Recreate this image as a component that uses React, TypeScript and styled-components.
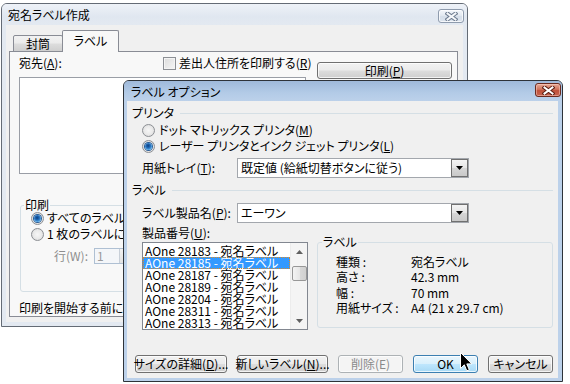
import React from "react";
import styled, { createGlobalStyle } from "styled-components";

const Global = createGlobalStyle`
  html, body { margin: 0; padding: 0; background: #ffffff; }
  body {
    font-family: "Noto Sans CJK JP", "Noto Sans", sans-serif;
    font-size: 12px;
    line-height: 14px;
    color: #000;
    font-feature-settings: "palt";
  }
  #root { width: 570px; height: 384px; }
`;

const Desktop = styled.div`
  position: relative;
  width: 570px;
  height: 384px;
  overflow: hidden;
  background: #ffffff;
`;

/* ---------- window chrome ---------- */
const Win = styled.div<{ $x: number; $y: number; $w: number; $h: number; $active?: boolean }>`
  position: absolute;
  left: ${(p) => p.$x}px;
  top: ${(p) => p.$y}px;
  width: ${(p) => p.$w}px;
  height: ${(p) => p.$h}px;
  box-sizing: border-box;
  display: flex;
  flex-direction: column;
  border: 1px solid ${(p) => (p.$active ? "#2e3339" : "#646b75")};
  border-radius: 6px 6px 0 0;
  background: ${(p) => (p.$active ? "#bcd1ea" : "#e3e9f1")};
  overflow: hidden;
`;

const TitleBar = styled.div<{ $h: number; $active?: boolean; $pad: number }>`
  height: ${(p) => p.$h}px;
  flex: none;
  display: flex;
  align-items: flex-start;
  justify-content: space-between;
  padding-left: ${(p) => p.$pad}px;
  background: ${(p) =>
    p.$active
      ? "linear-gradient(#9fb9da, #b3cbe7 60%, #bcd1ea)"
      : "linear-gradient(#eef2f8, #e0e7f0 60%, #e3e9f1)"};
`;

const TitleText = styled.span<{ $top: number }>`
  margin-top: ${(p) => p.$top}px;
  white-space: nowrap;
  color: #000;
`;

const CloseBtn = styled.div<{ $active?: boolean; $top: number; $right: number }>`
  box-sizing: border-box;
  width: 26px;
  height: 14px;
  margin-top: ${(p) => p.$top}px;
  margin-right: ${(p) => p.$right}px;
  border-radius: 3px;
  border: 1px solid ${(p) => (p.$active ? "#6b2a1f" : "#8e9bad")};
  background: ${(p) =>
    p.$active
      ? "linear-gradient(#e6a996, #d0735c 45%, #c0513a 55%, #c76450)"
      : "linear-gradient(#f4f7fb, #e3e9f1 45%, #d5dee9 55%, #dde4ee)"};
  box-shadow: inset 0 0 0 1px ${(p) => (p.$active ? "rgba(255,220,210,0.45)" : "rgba(255,255,255,0.7)")};
  display: flex;
  align-items: center;
  justify-content: center;
`;

const Frame = styled.div<{ $pad: string }>`
  flex: 1;
  display: flex;
  padding: ${(p) => p.$pad};
  min-height: 0;
`;

/* ---------- common controls ---------- */
const Key = styled.span`
  text-decoration: underline;
  text-underline-offset: 1px;
`;

const RadioDot = styled.span<{ $on?: boolean }>`
  box-sizing: border-box;
  width: 13px;
  height: 13px;
  flex: none;
  border-radius: 50%;
  border: 1px solid #8c8f94;
  background: radial-gradient(circle at 50% 50%, #f6f6f6 0, #eaeaea 50%, #d3d3d3 100%);
  display: inline-flex;
  align-items: center;
  justify-content: center;
  &::after {
    content: "";
    display: ${(p) => (p.$on ? "block" : "none")};
    width: 7px;
    height: 7px;
    border-radius: 50%;
    background: radial-gradient(circle at 45% 40%, #0d3f7d 0, #1f67b5 35%, #5db1ec 75%, #9ad3f7 100%);
    box-shadow: 0 0 0 1px #2a5d96;
  }
`;

const CheckBox = styled.span`
  box-sizing: border-box;
  width: 13px;
  height: 13px;
  flex: none;
  border: 1px solid #8c8f94;
  background: linear-gradient(135deg, #dcdcdc, #f6f6f6);
  box-shadow: inset 0 0 0 1px #f4f4f4;
`;

const PushButton = styled.div<{ $w: number; $h: number; $default?: boolean; $disabled?: boolean }>`
  box-sizing: border-box;
  width: ${(p) => p.$w}px;
  height: ${(p) => p.$h}px;
  flex: none;
  border-radius: 3px;
  border: 1px solid ${(p) => (p.$default ? "#3c7fb1" : p.$disabled ? "#adb2b5" : "#707070")};
  background: ${(p) =>
    p.$default
      ? "linear-gradient(#eaf6fd, #d9f0fc 48%, #bee6fd 52%, #a7d9f5)"
      : p.$disabled
      ? "#f4f4f4"
      : "linear-gradient(#f2f2f2, #ebebeb 48%, #dddddd 52%, #cfcfcf)"};
  box-shadow: inset 0 0 0 1px rgba(255, 255, 255, 0.75);
  color: ${(p) => (p.$disabled ? "#8a8a8a" : "#000")};
  display: flex;
  align-items: center;
  justify-content: center;
  white-space: nowrap;
  line-height: 12px;
`;

const Group = styled.fieldset<{ $w: number; $h: number; $mt: number; $ml: number }>`
  box-sizing: border-box;
  width: ${(p) => p.$w}px;
  height: ${(p) => p.$h}px;
  margin: ${(p) => p.$mt}px 0 0 ${(p) => p.$ml}px;
  padding: 0;
  min-width: 0;
  border: 1px solid #d5dfe5;
  border-radius: 3px;
  flex: none;
`;

const Legend = styled.legend<{ $ml: number }>`
  margin-left: ${(p) => p.$ml}px;
  padding: 0 1px;
  line-height: 14px;
  font-size: 12px;
`;

/* ---------- back window: 宛名ラベル作成 ---------- */
const BackClient = styled.div`
  flex: 1;
  display: flex;
  flex-direction: column;
  padding: 5px 5px 5px 3px;
  background: #f0f0f0;
`;

const TabStrip = styled.div`
  height: 22px;
  flex: none;
  display: flex;
  align-items: flex-end;
  padding-left: 4px;
  margin-bottom: -1px;
  position: relative;
  z-index: 1;
`;

const Tab = styled.div<{ $sel?: boolean }>`
  box-sizing: border-box;
  width: ${(p) => (p.$sel ? 57 : 50)}px;
  height: ${(p) => (p.$sel ? 22 : 17)}px;
  margin-left: ${(p) => (p.$sel ? -1 : 0)}px;
  border: 1px solid #898c95;
  border-bottom: ${(p) => (p.$sel ? "none" : "1px solid #898c95")};
  border-radius: 2px 2px 0 0;
  background: ${(p) =>
    p.$sel ? "#f8f8f8" : "linear-gradient(#f2f2f2, #ebebeb 48%, #dddddd 52%, #cfcfcf)"};
  display: flex;
  align-items: center;
  justify-content: center;
  padding-bottom: ${(p) => (p.$sel ? 1 : 0)}px;
`;

const TabPanel = styled.div`
  flex: 1;
  display: grid;
  grid-template-columns: 287px 135px;
  column-gap: 11px;
  align-items: start;
  padding: 4px 0 0 9px;
  border: 1px solid #898c95;
  background: #f8f8f8;
  min-height: 0;
`;

const Column = styled.div<{ $mt?: number }>`
  display: flex;
  flex-direction: column;
  margin-top: ${(p) => p.$mt ?? 0}px;
`;

const AddrHeader = styled.div`
  height: 14px;
  display: grid;
  grid-template-columns: 144px auto;
  align-items: center;
  white-space: nowrap;
`;

const CheckLine = styled.div`
  display: flex;
  align-items: center;
  gap: 3px;
`;

const AddrBox = styled.div`
  box-sizing: border-box;
  margin-top: 7px;
  height: 97px;
  border: 1px solid #9a9ea6;
  background: #ffffff;
`;

const PrintOpt = styled.div<{ $mt: number; $h: number; $pl: number }>`
  height: ${(p) => p.$h}px;
  margin-top: ${(p) => p.$mt}px;
  padding-left: ${(p) => p.$pl}px;
  display: flex;
  align-items: center;
  gap: 3px;
  white-space: nowrap;
`;

const DimLabel = styled.span`
  color: #8d8d8d;
  width: 37px;
`;

const DimInput = styled.div`
  box-sizing: border-box;
  width: 36px;
  height: 16px;
  border: 1px solid #afc0d3;
  background: #f4f6f9;
  color: #9a9a9a;
  display: flex;
  align-items: center;
  padding-left: 2px;
`;

const Spin = styled.div`
  margin-left: auto;
  width: 9px;
  height: 14px;
  border-left: 1px solid #c8cfd8;
  background: linear-gradient(#f2f2f2, #e2e2e2);
`;

const Note = styled.div`
  margin-top: 9px;
  height: 14px;
  white-space: nowrap;
`;

/* ---------- front window: ラベル オプション ---------- */
const Client = styled.div`
  flex: 1;
  display: flex;
  flex-direction: column;
  padding: 5px 5px 0 5px;
  background: #f0f0f0;
`;

const SectionHead = styled.div<{ $mt?: number }>`
  height: 14px;
  margin-top: ${(p) => p.$mt ?? 0}px;
  display: flex;
  align-items: center;
  gap: 6px;
  &::after {
    content: "";
    flex: 1;
    height: 1px;
    background: #d5dfe5;
  }
`;

const OptionRow = styled.div<{ $mt?: number }>`
  height: 16px;
  margin-top: ${(p) => p.$mt ?? 0}px;
  padding-left: 10px;
  display: flex;
  align-items: center;
  gap: 4px;
  white-space: nowrap;
`;

const FieldRow = styled.div<{ $mt: number }>`
  height: 20px;
  margin-top: ${(p) => p.$mt}px;
  padding-left: 10px;
  display: flex;
  align-items: center;
`;

const FieldLabel = styled.span`
  width: 95px;
  flex: none;
  white-space: nowrap;
`;

const Combo = styled.div`
  box-sizing: border-box;
  width: 232px;
  height: 20px;
  border: 1px solid #a3a7ad;
  background: #ffffff;
  display: flex;
  align-items: center;
  padding-left: 3px;
  white-space: nowrap;
`;

const DropBtn = styled.div`
  box-sizing: border-box;
  margin-left: auto;
  width: 17px;
  height: 18px;
  border: 1px solid #707070;
  background: linear-gradient(#f4f4f4, #e6e6e6 48%, #d6d6d6 52%, #c9c9c9);
  display: flex;
  align-items: center;
  justify-content: center;
`;

const ListArea = styled.div`
  margin-top: 3px;
  padding-left: 10px;
  display: flex;
  align-items: flex-start;
`;

const ListCol = styled.div`
  display: flex;
  flex-direction: column;
  width: 166px;
`;

const ListBox = styled.div`
  box-sizing: border-box;
  margin-top: 2px;
  height: 88px;
  border: 1px solid #828790;
  background: #ffffff;
  display: flex;
`;

const Items = styled.div`
  flex: 1;
  padding-top: 2px;
  display: flex;
  flex-direction: column;
`;

const Item = styled.div<{ $sel?: boolean }>`
  box-sizing: border-box;
  height: 12px;
  line-height: 12px;
  padding-left: 2px;
  white-space: nowrap;
  color: ${(p) => (p.$sel ? "#ffffff" : "#000")};
  background: ${(p) => (p.$sel ? "#3399ff" : "transparent")};
  outline: ${(p) => (p.$sel ? "1px dotted #d98a2b" : "none")};
  outline-offset: -1px;
`;

const ScrollBar = styled.div`
  width: 16px;
  flex: none;
  display: flex;
  flex-direction: column;
  align-items: center;
  background: #f4f4f4;
  border-left: 1px solid #ececec;
`;

const ArrowCell = styled.div`
  height: 17px;
  width: 100%;
  display: flex;
  align-items: center;
  justify-content: center;
`;

const Track = styled.div`
  flex: 1;
  width: 100%;
  display: flex;
  justify-content: center;
`;

const Thumb = styled.div`
  box-sizing: border-box;
  margin-top: 6px;
  width: 15px;
  height: 15px;
  border: 1px solid #979797;
  border-radius: 2px;
  background: linear-gradient(90deg, #f3f3f3, #e6e6e6 50%, #d8d8d8 52%, #d0d0d0);
`;

const InfoGrid = styled.div`
  display: grid;
  grid-template-columns: 75px auto;
  grid-auto-rows: 15.5px;
  align-items: center;
  padding: 5px 0 0 18px;
  white-space: nowrap;
`;

const ButtonRow = styled.div`
  margin-top: 25px;
  padding-left: 3px;
  display: flex;
  gap: 10px;
`;

const CursorLayer = styled.svg`
  position: absolute;
  left: 460px;
  top: 352px;
`;

/* ---------- small drawings ---------- */
const CloseGlyph = ({ active }: { active?: boolean }) => (
  <svg width="13" height="9" viewBox="0 0 13 9">
    <path d="M2.5 1.5 L10.5 7.5 M10.5 1.5 L2.5 7.5" stroke={active ? "#5a1d12" : "#6c7a8e"} strokeWidth="4" strokeLinecap="square" />
    <path d="M2.5 1.5 L10.5 7.5 M10.5 1.5 L2.5 7.5" stroke={active ? "#ffffff" : "#f4f6f9"} strokeWidth="2" strokeLinecap="square" />
  </svg>
);

const Tri = ({ up, color = "#000" }: { up?: boolean; color?: string }) => (
  <svg width="7" height="4" viewBox="0 0 7 4">
    <polygon points={up ? "3.5,0 7,4 0,4" : "0,0 7,0 3.5,4"} fill={color} />
  </svg>
);

const items = ["28183", "28185", "28187", "28189", "28204", "28311", "28313"];

export default function App() {
  return (
    <>
      <Global />
      <Desktop>
        {/* back window */}
        <Win $x={1} $y={3} $w={467} $h={324}>
          <TitleBar $h={21} $pad={6}>
            <TitleText $top={4}>宛名ラベル作成</TitleText>
            <CloseBtn $top={5} $right={3}>
              <CloseGlyph />
            </CloseBtn>
          </TitleBar>
          <Frame $pad="0 4px 4px 4px">
            <BackClient>
              <TabStrip>
                <Tab>封筒</Tab>
                <Tab $sel>ラベル</Tab>
              </TabStrip>
              <TabPanel>
                <Column>
                  <AddrHeader>
                    <span>
                      宛先(<Key>A</Key>):
                    </span>
                    <CheckLine>
                      <CheckBox />
                      <span>
                        差出人住所を印刷する(<Key>R</Key>)
                      </span>
                    </CheckLine>
                  </AddrHeader>
                  <AddrBox />
                  <Group $w={287} $h={94} $mt={24} $ml={1}>
                    <Legend $ml={3}>印刷</Legend>
                    <PrintOpt $mt={0} $h={12} $pl={10}>
                      <RadioDot $on />
                      <span>
                        すべてのラベルに同じ宛名を印刷する(<Key>F</Key>)
                      </span>
                    </PrintOpt>
                    <PrintOpt $mt={4} $h={12} $pl={10}>
                      <RadioDot />
                      <span>
                        1 枚のラベルに印刷する(<Key>G</Key>)
                      </span>
                    </PrintOpt>
                    <PrintOpt $mt={8} $h={16} $pl={33}>
                      <DimLabel>行(W):</DimLabel>
                      <DimInput>
                        1<Spin />
                      </DimInput>
                    </PrintOpt>
                  </Group>
                  <Note>印刷を開始する前に、プリンタにラベル用紙をセットしてください。</Note>
                </Column>
                <Column $mt={6}>
                  <PushButton $w={135} $h={17}>
                    印刷(<Key>P</Key>)
                  </PushButton>
                </Column>
              </TabPanel>
            </BackClient>
          </Frame>
        </Win>

        {/* front dialog */}
        <Win $active $x={123} $y={80} $w={440} $h={302}>
          <TitleBar $active $h={20} $pad={7}>
            <TitleText $top={4}>ラベル オプション</TitleText>
            <CloseBtn $active $top={2} $right={1}>
              <CloseGlyph active />
            </CloseBtn>
          </TitleBar>
          <Frame $pad="0 4px 3px 3px">
            <Client>
              <SectionHead>プリンタ</SectionHead>
              <OptionRow $mt={2}>
                <RadioDot />
                <span>
                  ドット マトリックス プリンタ(<Key>M</Key>)
                </span>
              </OptionRow>
              <OptionRow>
                <RadioDot $on />
                <span>
                  レーザー プリンタとインク ジェット プリンタ(<Key>L</Key>)
                </span>
              </OptionRow>
              <FieldRow $mt={4}>
                <FieldLabel>
                  用紙トレイ(<Key>T</Key>):
                </FieldLabel>
                <Combo>
                  既定値 (給紙切替ボタンに従う)
                  <DropBtn>
                    <Tri />
                  </DropBtn>
                </Combo>
              </FieldRow>
              <SectionHead $mt={5}>ラベル</SectionHead>
              <FieldRow $mt={6}>
                <FieldLabel>
                  ラベル製品名(<Key>P</Key>):
                </FieldLabel>
                <Combo>
                  エーワン
                  <DropBtn>
                    <Tri />
                  </DropBtn>
                </Combo>
              </FieldRow>
              <ListArea>
                <ListCol>
                  <span>
                    製品番号(<Key>U</Key>):
                  </span>
                  <ListBox>
                    <Items>
                      {items.map((n) => (
                        <Item key={n} $sel={n === "28185"}>
                          AOne {n} - 宛名ラベル
                        </Item>
                      ))}
                    </Items>
                    <ScrollBar>
                      <ArrowCell>
                        <Tri up color="#606060" />
                      </ArrowCell>
                      <Track>
                        <Thumb />
                      </Track>
                      <ArrowCell>
                        <Tri color="#606060" />
                      </ArrowCell>
                    </ScrollBar>
                  </ListBox>
                </ListCol>
                <Group $w={236} $h={93} $mt={9} $ml={9}>
                  <Legend $ml={4}>ラベル</Legend>
                  <InfoGrid>
                    <span>種類 :</span>
                    <span>宛名ラベル</span>
                    <span>高さ :</span>
                    <span>42.3 mm</span>
                    <span>幅 :</span>
                    <span>70 mm</span>
                    <span>用紙サイズ :</span>
                    <span>A4 (21 x 29.7 cm)</span>
                  </InfoGrid>
                </Group>
              </ListArea>
              <ButtonRow>
                <PushButton $w={92} $h={18}>
                  サイズの詳細(<Key>D</Key>)...
                </PushButton>
                <PushButton $w={91} $h={18}>
                  新しいラベル(<Key>N</Key>)...
                </PushButton>
                <PushButton $w={65} $h={18} $disabled>
                  削除(E)
                </PushButton>
                <PushButton $w={65} $h={18} $default>
                  OK
                </PushButton>
                <PushButton $w={65} $h={18}>
                  キャンセル
                </PushButton>
              </ButtonRow>
            </Client>
          </Frame>
        </Win>

        <CursorLayer width="13" height="21" viewBox="0 0 13 21">
          <path d="M0.5 0.5 L0.5 16.5 L4.3 12.8 L6.8 18.8 L9.3 17.8 L6.8 11.9 L11.8 11.9 Z" fill="#000" stroke="#fff" strokeWidth="1" strokeLinejoin="miter" />
        </CursorLayer>
      </Desktop>
    </>
  );
}
